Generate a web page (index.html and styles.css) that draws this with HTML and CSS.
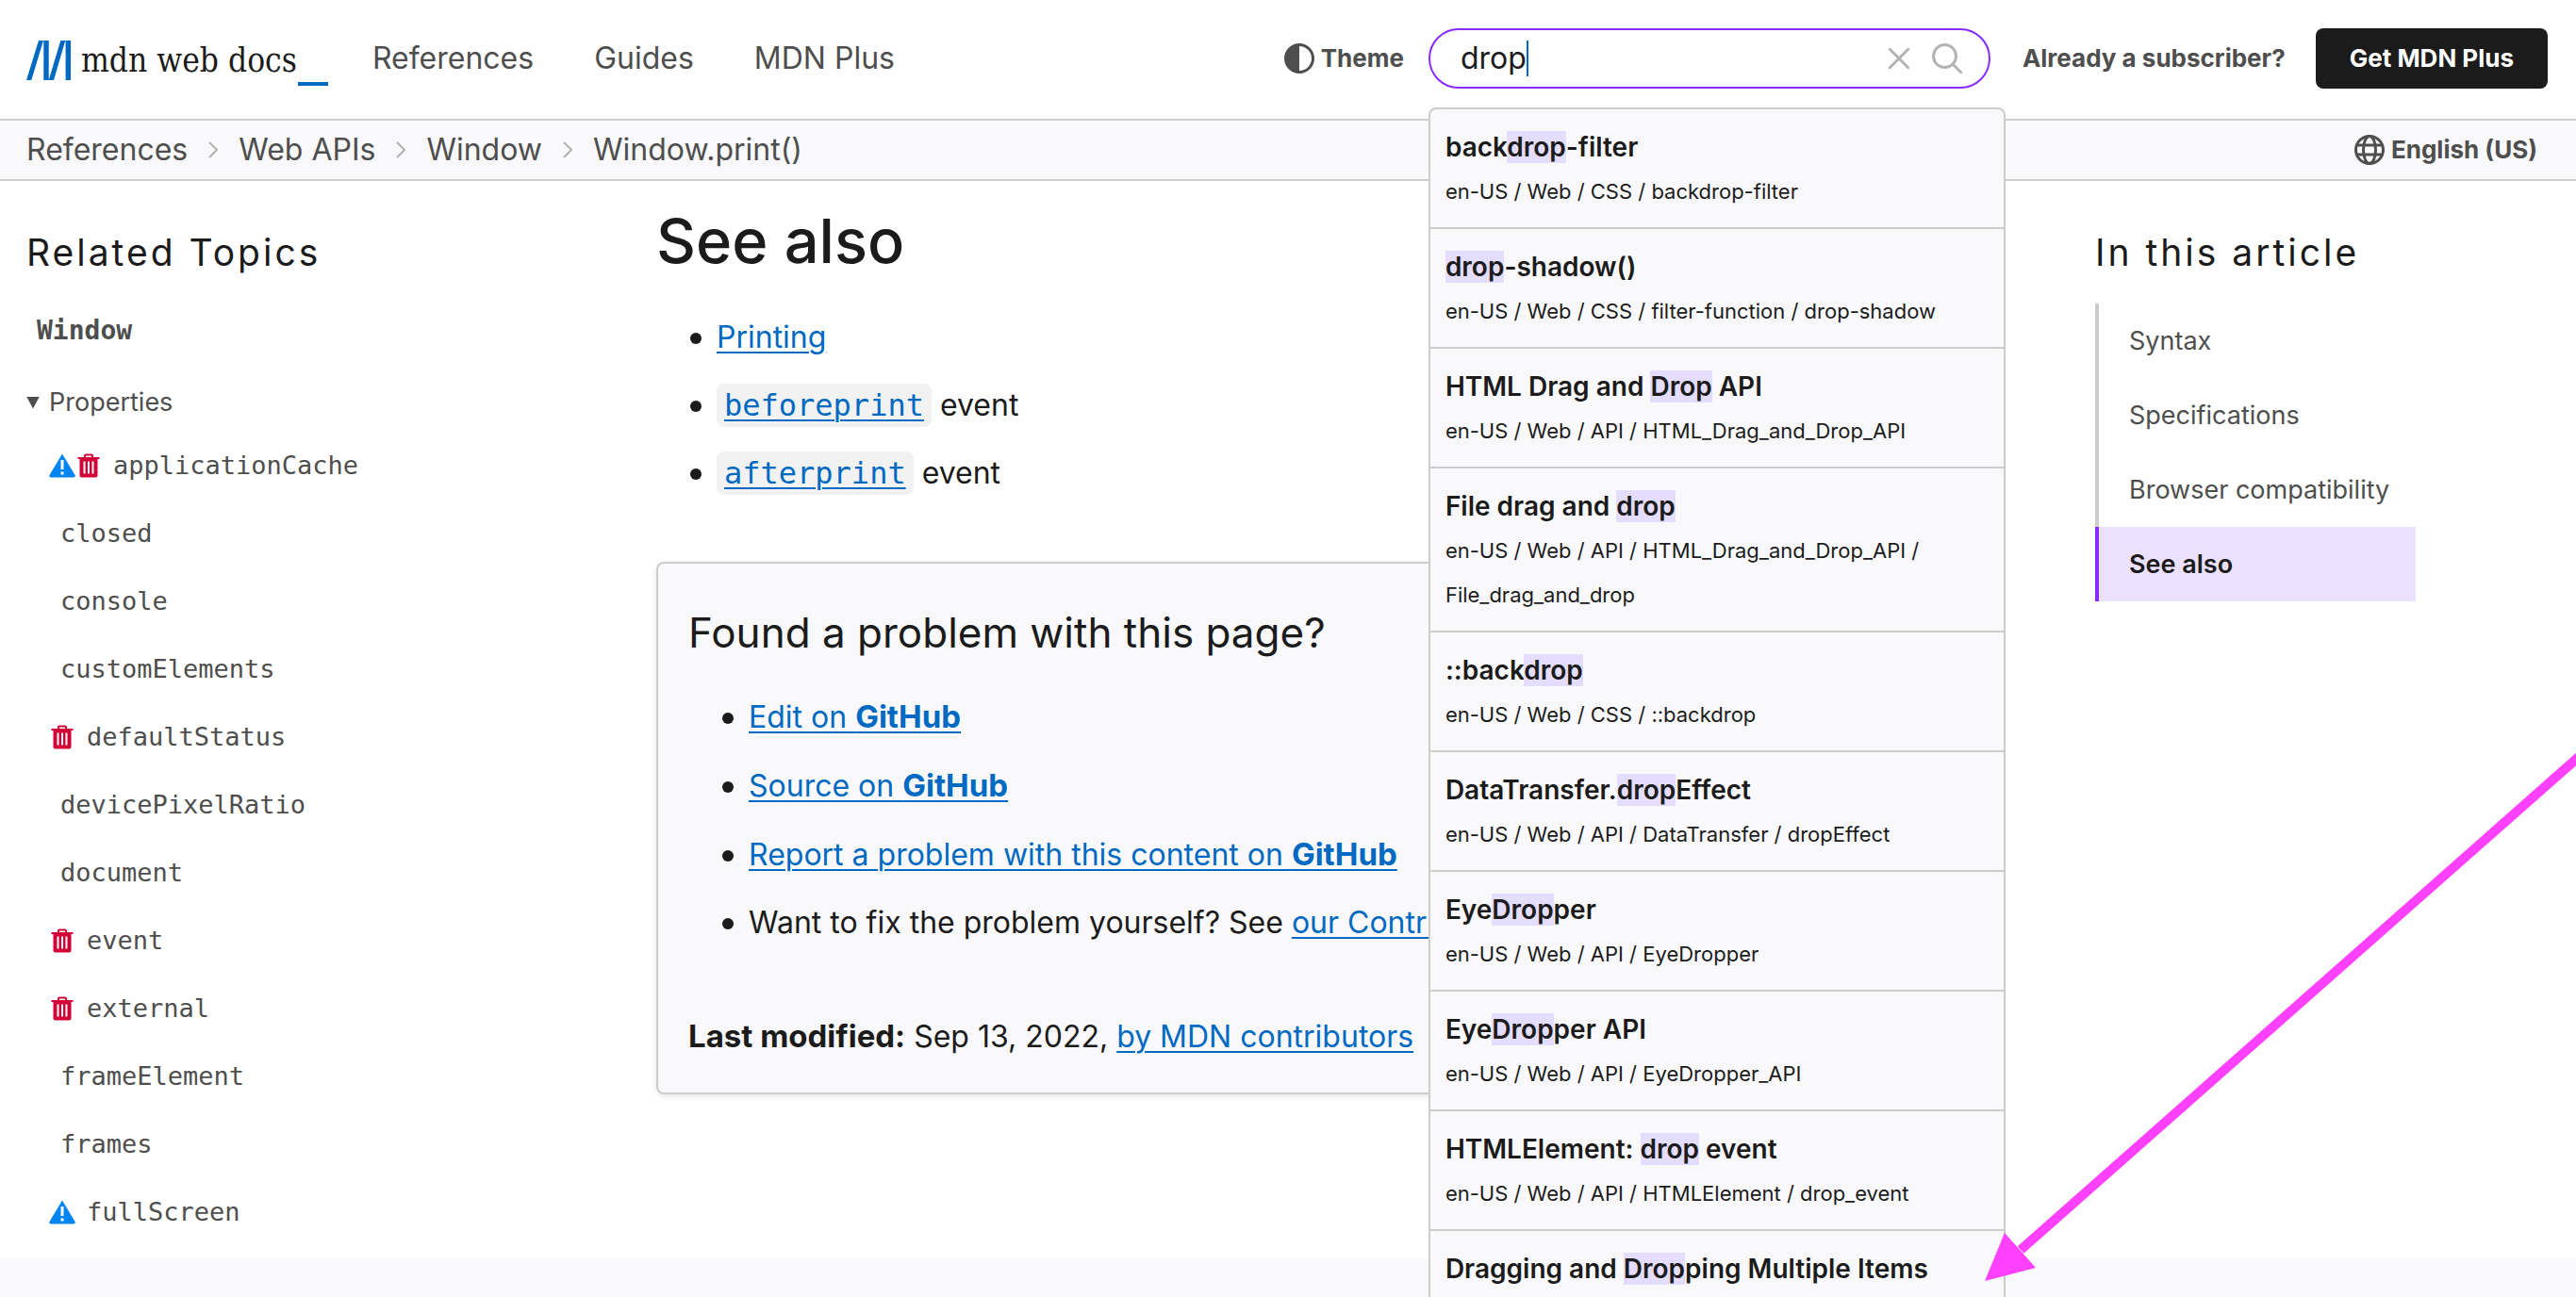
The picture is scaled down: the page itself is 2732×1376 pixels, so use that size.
FILE: index.html
```html
<!DOCTYPE html>
<html lang="en-US">
<head>
<meta charset="utf-8">
<title>Window.print() - Web APIs | MDN</title>
<link rel="stylesheet" href="styles.css">
</head>
<body>
<svg class="sprite" aria-hidden="true">
  <symbol id="i-trash" viewBox="0 0 24 26"><path fill="#d30038" fill-rule="evenodd" d="M7 4V2.500Q7 .5 9 .5h6q2 0 2 2V4h6.500v2H21.500v17q0 2.500-2.500 2.500H5Q2.500 25.500 2.500 23V6H.5V4zM9 4h6V2.500H9zM6.500 8.500v13h2v-13zM11 8.500v13h2v-13zM15.500 8.500v13h2v-13z"/></symbol>
  <symbol id="i-warn" viewBox="0 0 28 26"><path fill="#0085f2" d="M14 .5 27.800 23.500Q28 25.500 26 25.500H2Q0 25.500 .2 23.500z"/><path fill="#fff" d="M12.500 7h3v10h-3zM12.500 19.500h3v3h-3z"/></symbol>
</svg>
<div class="page">
  <header class="top">
    <a class="logo" href="#">
      <svg class="logo-mark" viewBox="0 0 47 42" aria-hidden="true"><path fill="#0069c2" d="M13 0h5L5.300 42H0zM18.300 0h5.400v42h-5.400zM36.300 0h5L29 42h-5.300zM41.600 0H47v42h-5.400z"/></svg>
      <span class="logo-text">mdn web docs</span>
      <span class="logo-cursor"></span>
    </a>
    <nav class="main-nav">
      <a href="#">References</a>
      <a href="#">Guides</a>
      <a href="#">MDN Plus</a>
    </nav>
    <button class="theme" type="button">
      <svg class="icon" viewBox="0 0 32 32" aria-hidden="true"><circle cx="16" cy="16" r="14.500" fill="none" stroke="#4e4e4e" stroke-width="3"/><path fill="#4e4e4e" d="M16 1a15 15 0 0 0 0 30z"/></svg>
      Theme
    </button>
    <form class="search" role="search">
      <input class="search-input" id="q" type="text" value="drop" aria-label="Search MDN">
      <span class="caret"></span>
      <button class="search-btn clear" type="button" aria-label="Clear">
        <svg viewBox="0 0 22 22" aria-hidden="true"><path d="M1 1l20 20M21 1L1 21"/></svg>
      </button>
      <button class="search-btn find" type="submit" aria-label="Search">
        <svg viewBox="0 0 32 32" aria-hidden="true"><circle cx="13.500" cy="13.500" r="12"/><path d="M22 22l9 9"/></svg>
      </button>
      <div class="results">
        <a href="#"><b>back<mark>drop</mark>-filter</b><span>en-US / Web / CSS / backdrop-filter</span></a>
        <a href="#"><b><mark>drop</mark>-shadow()</b><span>en-US / Web / CSS / filter-function / drop-shadow</span></a>
        <a href="#"><b>HTML Drag and <mark>Drop</mark> API</b><span>en-US / Web / API / HTML_Drag_and_Drop_API</span></a>
        <a href="#"><b>File drag and <mark>drop</mark></b><span>en-US / Web / API / HTML_Drag_and_Drop_API / File_drag_and_drop</span></a>
        <a href="#"><b>::back<mark>drop</mark></b><span>en-US / Web / CSS / ::backdrop</span></a>
        <a href="#"><b>DataTransfer.<mark>drop</mark>Effect</b><span>en-US / Web / API / DataTransfer / dropEffect</span></a>
        <a href="#"><b>Eye<mark>Drop</mark>per</b><span>en-US / Web / API / EyeDropper</span></a>
        <a href="#"><b>Eye<mark>Drop</mark>per API</b><span>en-US / Web / API / EyeDropper_API</span></a>
        <a href="#"><b>HTMLElement: <mark>drop</mark> event</b><span>en-US / Web / API / HTMLElement / drop_event</span></a>
        <a href="#"><b>Dragging and <mark>Drop</mark>ping Multiple Items</b></a>
      </div>
    </form>
    <a class="login" href="#">Already a subscriber?</a>
    <a class="plus" href="#">Get MDN Plus</a>
  </header>

  <div class="crumb-bar">
    <nav class="crumbs" aria-label="Breadcrumb">
      <a href="#">References</a>
      <svg class="chev" viewBox="0 0 10 18" aria-hidden="true"><path d="M1 1l8 8-8 8"/></svg>
      <a href="#">Web APIs</a>
      <svg class="chev" viewBox="0 0 10 18" aria-hidden="true"><path d="M1 1l8 8-8 8"/></svg>
      <a href="#">Window</a>
      <svg class="chev" viewBox="0 0 10 18" aria-hidden="true"><path d="M1 1l8 8-8 8"/></svg>
      <a href="#">Window.print()</a>
    </nav>
    <button class="lang" type="button">
      <svg class="icon" viewBox="0 0 32 32" fill="none" stroke="#4e4e4e" stroke-width="3" aria-hidden="true"><circle cx="16" cy="16" r="14.500"/><ellipse cx="16" cy="16" rx="6.500" ry="14.500"/><path d="M3 11h26M3 21h26"/></svg>
      English (US)
    </button>
  </div>

  <div class="columns">
    <aside class="sidebar">
      <h2 class="side-title">Related Topics</h2>
      <a class="side-root" href="#">Window</a>
      <details open>
        <summary>Properties</summary>
        <ul class="props">
          <li><svg class="i-warn"><use href="#i-warn"/></svg><svg class="i-trash"><use href="#i-trash"/></svg><a href="#">applicationCache</a></li>
          <li><a href="#">closed</a></li>
          <li><a href="#">console</a></li>
          <li><a href="#">customElements</a></li>
          <li><svg class="i-trash"><use href="#i-trash"/></svg><a href="#">defaultStatus</a></li>
          <li><a href="#">devicePixelRatio</a></li>
          <li><a href="#">document</a></li>
          <li><svg class="i-trash"><use href="#i-trash"/></svg><a href="#">event</a></li>
          <li><svg class="i-trash"><use href="#i-trash"/></svg><a href="#">external</a></li>
          <li><a href="#">frameElement</a></li>
          <li><a href="#">frames</a></li>
          <li><svg class="i-warn"><use href="#i-warn"/></svg><a href="#">fullScreen</a></li>
        </ul>
      </details>
    </aside>

    <main class="article">
      <h2>See also</h2>
      <ul>
        <li><a href="#">Printing</a></li>
        <li><a href="#"><code>beforeprint</code></a> event</li>
        <li><a href="#"><code>afterprint</code></a> event</li>
      </ul>
      <section class="feedback">
        <h3>Found a problem with this page?</h3>
        <ul>
          <li><a href="#">Edit on <b>GitHub</b></a></li>
          <li><a href="#">Source on <b>GitHub</b></a></li>
          <li><a href="#">Report a problem with this content on <b>GitHub</b></a></li>
          <li>Want to fix the problem yourself? See <a href="#">our Contribution guide</a>.</li>
        </ul>
        <p><b>Last modified:</b> Sep 13, 2022, <a href="#">by MDN contributors</a></p>
      </section>
    </main>

    <aside class="toc">
      <h2 class="side-title">In this article</h2>
      <ul>
        <li><a href="#">Syntax</a></li>
        <li><a href="#">Specifications</a></li>
        <li><a href="#">Browser compatibility</a></li>
        <li><a class="current" href="#">See also</a></li>
      </ul>
    </aside>
  </div>
  <footer class="footer"></footer>
  <svg class="arrow" viewBox="0 0 627 556" aria-hidden="true"><path stroke="#ff40ff" stroke-width="10" d="M640 -10L38 522"/><path fill="#ff40ff" d="M0 555L21 504L54 541z"/></svg>
</div>
</body>
</html>
```
FILE: styles.css
```css
* { box-sizing: border-box; }

body {
  margin: 0;
  font-family: Inter, "Liberation Sans", sans-serif;
  font-size: 32px;
  line-height: 56px;
  color: #1b1b1b;
  background: #fff;
}

.page {
  position: relative;
  display: flex;
  flex-direction: column;
  height: 100vh;
  overflow: hidden;
}

.sprite { display: none; }
ul { margin: 0; padding: 0; list-style: none; }
h2, h3, p { margin: 0; }
button { border: 0; padding: 0; background: none; font: inherit; color: inherit; }
.icon { width: 32px; height: 32px; }

/* Header */
.top {
  display: flex;
  align-items: center;
  flex: none;
  height: 128px;
  padding: 0 30px 2px 28px;
  border-bottom: 2px solid #cdcdcd;
  color: #4e4e4e;
}
.top a { color: inherit; text-decoration: none; }
.logo { display: flex; align-items: center; padding-top: 4px; line-height: 54px; }
.logo-mark { width: 47px; height: 42px; margin-right: 11px; }
.logo-text {
  font-family: "DejaVu Serif Condensed", "DejaVu Serif", serif;
  font-stretch: condensed;
  font-size: 35px;
  color: #1b1b1b;
}
.logo-cursor {
  align-self: flex-end;
  width: 32px;
  height: 4px;
  margin-left: 1px;
  background: #0069c2;
}
.main-nav { display: flex; gap: 64px; margin-left: 47px; }
.theme, .lang {
  display: flex;
  align-items: center;
  gap: 7px;
  font-size: 26px;
  font-weight: 700;
  color: #4e4e4e;
}
.theme { margin-left: auto; }

.search {
  position: relative;
  display: flex;
  align-items: center;
  width: 596px;
  height: 64px;
  margin: 0 34px 0 26px;
  padding: 0 28px 0 32px;
  border: 2px solid #872bff;
  border-radius: 32px;
}
.search-input {
  field-sizing: content;
  border: 0;
  padding: 0;
  outline: 0;
  background: none;
  font: inherit;
  color: #1b1b1b;
}
.caret { width: 2px; height: 38px; background: #0069c2; }
.search-btn { display: flex; }
.search-btn svg { fill: none; stroke: #b3b3b3; stroke-width: 3; stroke-linecap: round; }
.clear { margin: 0 24px 0 auto; }
.clear svg { width: 22px; height: 22px; }
.find svg { width: 32px; height: 32px; }

.results {
  position: absolute;
  z-index: 2;
  top: 82px;
  left: -2px;
  width: 612px;
  border: 2px solid #cdcdcd;
  border-radius: 8px;
  background: #f9f9fb;
  color: #1b1b1b;
}
.results a {
  display: flex;
  flex-direction: column;
  min-height: 127px;
  padding: 16px 16px 14px;
  border-bottom: 2px solid #cdcdcd;
}
.results b { font-size: 28px; font-weight: 600; line-height: 48px; }
.results span { font-size: 22px; line-height: 47px; }
mark { background: #e5ddff; color: inherit; }

.login { font-size: 26px; font-weight: 700; }
.top .plus {
  margin-left: 32px;
  padding: 0 36px;
  border-radius: 8px;
  background: #1b1b1b;
  color: #fff;
  font-size: 26px;
  font-weight: 700;
  line-height: 64px;
}

/* Breadcrumbs */
.crumb-bar {
  display: flex;
  align-items: center;
  justify-content: space-between;
  flex: none;
  height: 64px;
  padding: 0 41px 0 28px;
  border-bottom: 2px solid #cdcdcd;
  background: #f9f9fb;
}
.crumbs { display: flex; align-items: center; gap: 22px; }
.crumbs a { color: #4e4e4e; text-decoration: none; }
.chev { width: 10px; height: 18px; fill: none; stroke: #b3b3b3; stroke-width: 2; }

/* Columns */
.columns {
  display: grid;
  grid-template-columns: 640px 1fr 340px;
  column-gap: 28px;
  flex: none;
  padding: 0 170px 0 28px;
}
.side-title {
  color: #1b1b1b;
  font-size: 39px;
  font-weight: 400;
  letter-spacing: 3px;
  line-height: 56px;
}

.sidebar { padding: 48px 0 13px; color: #4e4e4e; font-size: 27px; }
.sidebar a { color: inherit; text-decoration: none; font-family: "DejaVu Sans Mono", monospace; }
.side-root { display: block; margin: 27px 0 20px; padding-left: 11px; font-size: 28px; font-weight: 700; }
.sidebar summary { display: flex; align-items: center; gap: 10px; list-style: none; }
.sidebar summary::before {
  content: "";
  width: 14px;
  height: 13px;
  background: currentColor;
  clip-path: polygon(0 0, 100% 0, 50% 100%);
}
.props { padding: 3px 0 0 24px; }
.props li { display: flex; align-items: center; height: 72px; }
.props a { padding-left: 12px; }
.i-warn { width: 28px; height: 26px; }
.i-trash { width: 24px; height: 26px; margin: 0 2px; }

.article { padding: 30px 84px 0 0; }
.article h2 { margin-bottom: 40px; font-size: 65px; font-weight: 500; line-height: 68px; }
.article ul { padding-left: 64px; }
.article li { margin-bottom: 16px; }
.article li::before {
  content: "";
  display: inline-block;
  width: 12px;
  height: 12px;
  margin: 0 16px 0 -28px;
  border-radius: 50%;
  background: #1b1b1b;
  vertical-align: 4px;
}
.article a { color: #0069c2; text-underline-offset: 4px; text-decoration-thickness: 2px; }
.article b { font-size: 33px; font-weight: 700; }
.article code {
  padding: 4px 8px;
  border-radius: 8px;
  background: #f2f2f2;
  font-family: "DejaVu Sans Mono", monospace;
  font-size: 32px;
}
.feedback {
  margin-top: 66px;
  padding: 45px 32px 31px;
  border: 2px solid #cdcdcd;
  border-radius: 8px;
  background: #f9f9fb;
  box-shadow: 0 2px 6px rgba(0, 0, 0, 0.1);
}
.feedback h3 { margin-bottom: 33px; font-size: 44px; font-weight: 400; line-height: 56px; }
.feedback p { margin-top: 64px; }

.toc { padding-top: 48px; }
.toc ul { margin-top: 26px; }
.toc a {
  display: block;
  padding-left: 32px;
  border-left: 4px solid #cdcdcd;
  color: #4e4e4e;
  font-size: 27px;
  line-height: 79px;
  text-decoration: none;
}
.toc .current { border-color: #872bff; background: #ebe1ff; color: #1b1b1b; font-weight: 600; }

.footer { flex: 1; background: #f9f9fb; }

.arrow {
  position: absolute;
  z-index: 3;
  right: 0;
  bottom: 16px;
  width: 627px;
  height: 556px;
  overflow: visible;
}
```
